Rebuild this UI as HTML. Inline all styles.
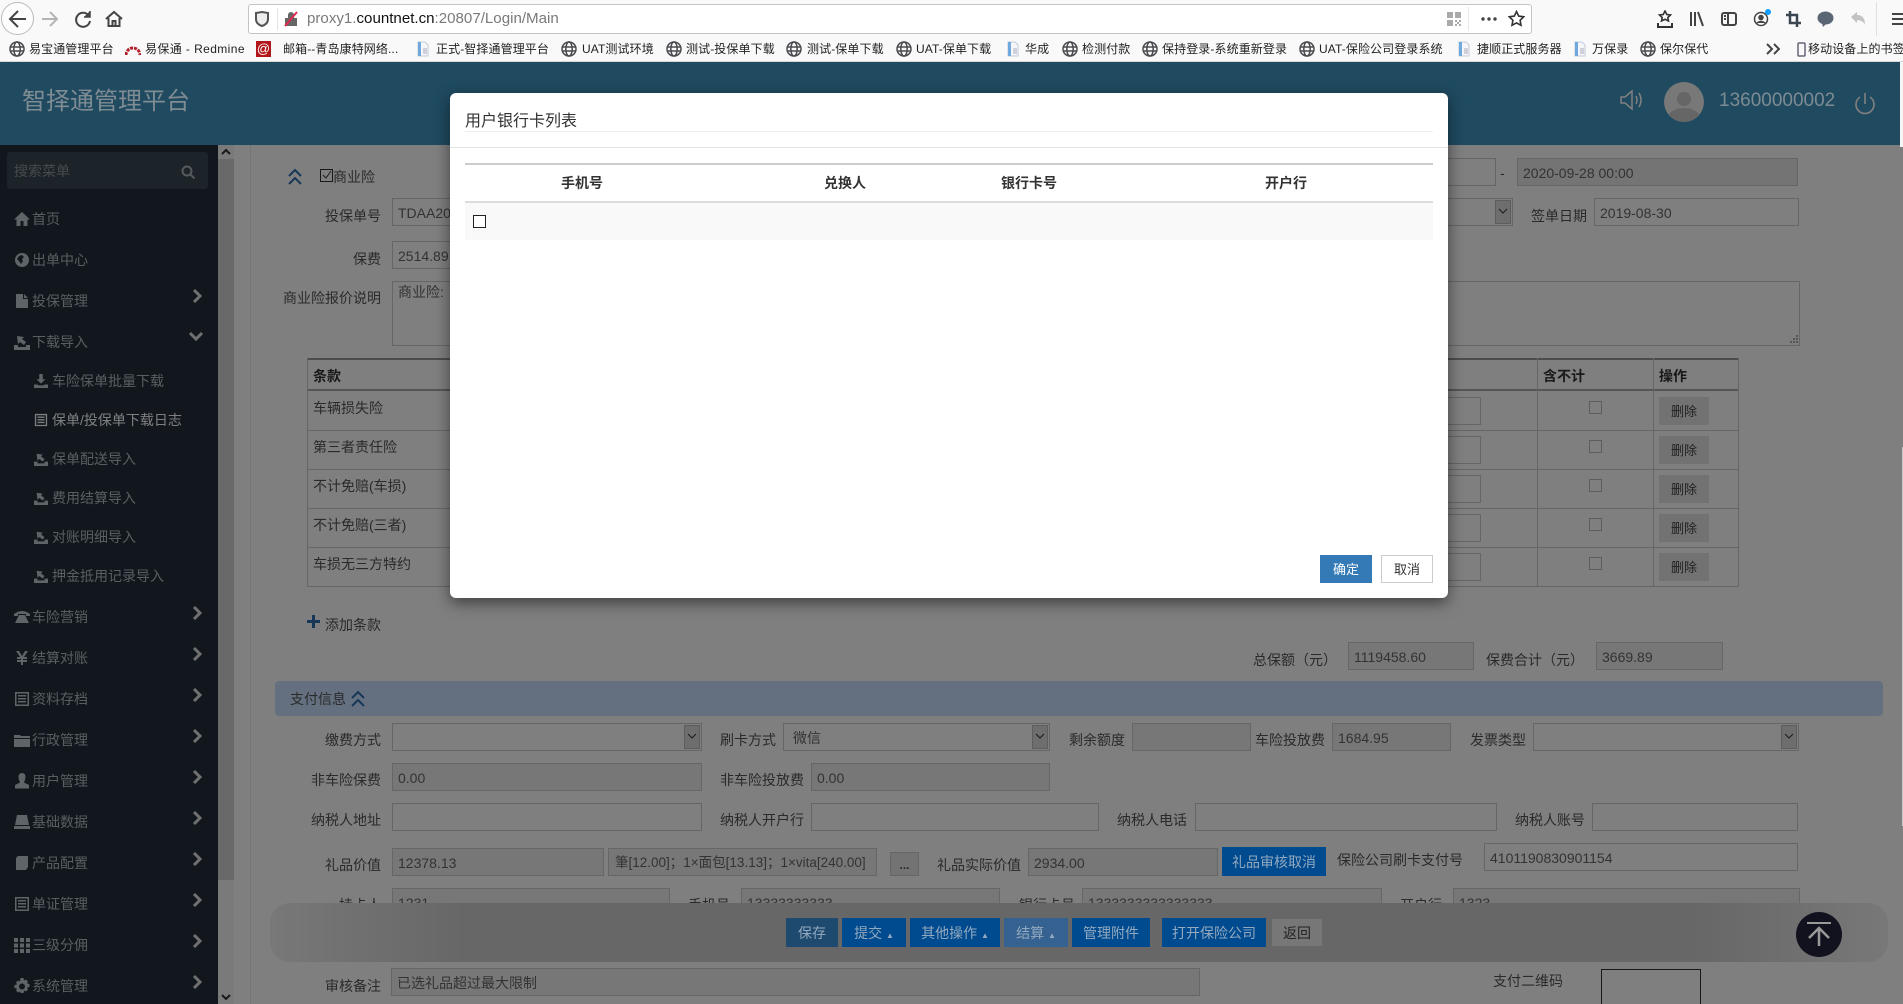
<!DOCTYPE html>
<html lang="zh-CN"><head><meta charset="utf-8"><title>智择通管理平台</title>
<style>
html,body{margin:0;padding:0;background:#fff}
html{overflow:hidden;width:1903px;height:1004px}
body{width:1903px;height:1004px;overflow:hidden;position:relative;font:14px/20px "Liberation Sans","Noto Sans CJK SC",sans-serif;color:#555}
div,span,svg{position:absolute;box-sizing:border-box}
.t{white-space:nowrap}
.bm{top:40px;font-size:12px;line-height:18px;color:#222;white-space:nowrap;letter-spacing:.1px}
.l{white-space:nowrap;text-align:right;color:#555}
.i{height:28px;border:1px solid #ccc;background:#fff;line-height:28px;padding:0 5px;color:#666;white-space:nowrap;overflow:hidden}
.d{background:#eee}
.sa{top:1px;bottom:1px;right:1px;width:16px;background:#ddd;border:1px solid #bbb}
.m{left:32px;color:#b0bcc2;white-space:nowrap}
.s{left:52px;color:#b0bcc2;white-space:nowrap}
.ic{left:14px;width:16px;height:16px;fill:#bcc8ce}
.ic2{left:34px;width:14px;height:14px;fill:#bcc8ce}
.cv{left:192px;width:12px;height:14px;fill:none;stroke:#e0e0e0;stroke-width:3}
.b{top:918px;height:29px;background:#004b8f;color:#93a9bf;text-align:center;line-height:31px;white-space:nowrap}
.del{left:1659px;width:50px;height:28px;background:#e4e4e4;text-align:center;line-height:29px;font-size:13px;color:#444}
.cb{left:1589px;width:13px;height:13px;border:1px solid #bbb;background:#fff}
.tl{background:#ccc}
.th{top:173px;font-weight:bold;color:#333;white-space:nowrap;transform:translateX(-50%)}
</style></head><body>
<svg width="0" height="0" style="position:absolute"><defs>
<symbol id="g" viewBox="0 0 16 16"><g fill="none" stroke="#4a4a4f" stroke-width="1.5"><circle cx="8" cy="8" r="7"/><ellipse cx="8" cy="8" rx="3.2" ry="7"/><path d="M1 6h14M1 10h14"/></g></symbol>
<symbol id="pg" viewBox="0 0 16 16"><path d="M3 1h7l3 3v11H3z" fill="#f4f6fa" stroke="#c4ccd8"/><path d="M3 1h3v14H3z" fill="#6fa8dc"/><path d="M8 8h4M8 10h4M8 12h4" stroke="#aab"/></symbol>
<symbol id="imp" viewBox="0 0 16 16"><path d="M0 11h4v2h8v-2h4v5H0zM3 2l7 1-2 2 4 3-2 3-4-3-2 2z"/></symbol>
<symbol id="dl" viewBox="0 0 16 16"><path d="M6 0h4v6h3l-5 5-5-5h3zM0 12h4l1 1h6l1-1h4v4H0z"/></symbol>
<symbol id="ls" viewBox="0 0 16 16"><path fill-rule="evenodd" d="M1 1h14v14H1zM2.500 2.500v11h11v-11zM4 4h8v1.500H4zM4 7h8v1.500H4zM4 10h8v1.500H4z"/></symbol>
</defs></svg>

<!-- base page under overlay -->
<div style="left:0;top:62px;width:1903px;height:942px;background:#fff"></div>

<!-- sidebar -->
<div style="left:0;top:145px;width:218px;height:859px;background:#222f3a"></div>
<div style="left:7px;top:152px;width:201px;height:37px;background:#3a4853;border-radius:3px"></div>
<div class="t" style="left:14px;top:161px;font-size:14px;color:#8a959c">搜索菜单</div>
<svg style="left:181px;top:165px" width="14" height="14" viewBox="0 0 14 14" fill="none" stroke="#aab4ba" stroke-width="2"><circle cx="6" cy="6" r="4.500"/><path d="M9.500 9.500l4 4"/></svg>

<svg class="ic" style="top:211px" viewBox="0 0 16 16"><path d="M8 1L0 8.500h2.500V15h4v-5h3v5h4V8.500H16z"/></svg><div class="m" style="top:209px">首页</div>
<svg class="ic" style="top:252px" viewBox="0 0 16 16"><path fill-rule="evenodd" d="M8 1a7 7 0 1 0 0 14A7 7 0 0 0 8 1zM5 4l3-1 2 2-2 2 1 2-2 3-2-3-2-2z"/></svg><div class="m" style="top:250px">出单中心</div>
<svg class="ic" style="top:293px" viewBox="0 0 16 16"><path d="M2 1h7v5h5v9H2zM10 1l4 4h-4z"/></svg><div class="m" style="top:291px">投保管理</div>
<svg class="cv" style="top:289px" viewBox="0 0 12 14"><path d="M2 1l6 6-6 6"/></svg>
<svg class="ic" style="top:334px"><use href="#imp"/></svg><div class="m" style="top:332px">下载导入</div>
<svg style="left:188px;top:331px;fill:none;stroke:#e0e0e0;stroke-width:3" width="16" height="12" viewBox="0 0 16 12"><path d="M2 2l6 6 6-6"/></svg>

<svg class="ic2" style="top:374px"><use href="#dl"/></svg><div class="s" style="top:371px">车险保单批量下载</div>
<svg class="ic2" style="top:413px;fill:#fff"><use href="#ls"/></svg><div class="s" style="top:410px;color:#fff">保单/投保单下载日志</div>
<svg class="ic2" style="top:452px"><use href="#imp"/></svg><div class="s" style="top:449px">保单配送导入</div>
<svg class="ic2" style="top:491px"><use href="#imp"/></svg><div class="s" style="top:488px">费用结算导入</div>
<svg class="ic2" style="top:530px"><use href="#imp"/></svg><div class="s" style="top:527px">对账明细导入</div>
<svg class="ic2" style="top:569px"><use href="#imp"/></svg><div class="s" style="top:566px">押金抵用记录导入</div>

<svg class="ic" style="top:609px" viewBox="0 0 16 16"><path d="M0 5q8-6 16 0v2h-4V5H4v2H0zM4 8l1-2h6l1 2 3 6H1z"/></svg><div class="m" style="top:607px">车险营销</div>
<svg class="cv" style="top:606px" viewBox="0 0 12 14"><path d="M2 1l6 6-6 6"/></svg>
<svg class="ic" style="top:650px" viewBox="0 0 16 16"><path d="M2 1h3l3 5 3-5h3l-4 6h3v2H9v1h4v2H9v3H7v-3H3v-2h4V9H3V7h3z"/></svg><div class="m" style="top:648px">结算对账</div>
<svg class="cv" style="top:647px" viewBox="0 0 12 14"><path d="M2 1l6 6-6 6"/></svg>
<svg class="ic" style="top:691px"><use href="#ls"/></svg><div class="m" style="top:689px">资料存档</div>
<svg class="cv" style="top:688px" viewBox="0 0 12 14"><path d="M2 1l6 6-6 6"/></svg>
<svg class="ic" style="top:732px" viewBox="0 0 16 16"><path d="M0 3h6l1 1h9v2H0zM0 7h16v8H0z"/></svg><div class="m" style="top:730px">行政管理</div>
<svg class="cv" style="top:729px" viewBox="0 0 12 14"><path d="M2 1l6 6-6 6"/></svg>
<svg class="ic" style="top:773px" viewBox="0 0 16 16"><path d="M8 0c2.500 0 3.500 2 3.500 4S10.500 8 10 9.500L15 12v3.500H1V12l5-2.500C5.500 8 4.500 6 4.500 4S5.500 0 8 0z"/></svg><div class="m" style="top:771px">用户管理</div>
<svg class="cv" style="top:770px" viewBox="0 0 12 14"><path d="M2 1l6 6-6 6"/></svg>
<svg class="ic" style="top:814px" viewBox="0 0 16 16"><path d="M3 1h10l2 10H1zM0 12h16v3H0z"/></svg><div class="m" style="top:812px">基础数据</div>
<svg class="cv" style="top:811px" viewBox="0 0 12 14"><path d="M2 1l6 6-6 6"/></svg>
<svg class="ic" style="top:855px" viewBox="0 0 16 16"><path d="M2 3l2-2h10v11l-2 3H2z"/></svg><div class="m" style="top:853px">产品配置</div>
<svg class="cv" style="top:852px" viewBox="0 0 12 14"><path d="M2 1l6 6-6 6"/></svg>
<svg class="ic" style="top:896px"><use href="#ls"/></svg><div class="m" style="top:894px">单证管理</div>
<svg class="cv" style="top:893px" viewBox="0 0 12 14"><path d="M2 1l6 6-6 6"/></svg>
<svg class="ic" style="top:937px" viewBox="0 0 16 16"><path d="M0 1h4v4H0zM6 1h4v4H6zM12 1h4v4h-4zM0 6.500h4v4H0zM6 6.500h4v4H6zM12 6.500h4v4h-4zM0 12h4v4H0zM6 12h4v4H6zM12 12h4v4h-4z"/></svg><div class="m" style="top:935px">三级分佣</div>
<svg class="cv" style="top:934px" viewBox="0 0 12 14"><path d="M2 1l6 6-6 6"/></svg>
<svg class="ic" style="top:978px" viewBox="0 0 16 16"><path fill-rule="evenodd" d="M6.500 0h3l.5 2.500 2-1 2 2-1 2 2.500.5v3l-2.500.5 1 2-2 2-2-1-.5 2.500h-3L6 13.500l-2 1-2-2 1-2L.500 10V7L3 6.500l-1-2 2-2 2 1zM8 5.500a3 3 0 1 0 0 6 3 3 0 0 0 0-6z"/></svg><div class="m" style="top:976px">系统管理</div>
<svg class="cv" style="top:975px" viewBox="0 0 12 14"><path d="M2 1l6 6-6 6"/></svg>

<!-- sidebar scrollbar -->
<div style="left:218px;top:145px;width:16px;height:859px;background:#f4f4f4"></div>
<div style="left:218px;top:159px;width:16px;height:721px;background:#d2d2d2"></div>
<svg style="left:221px;top:148px" width="10" height="8" viewBox="0 0 10 8" fill="none" stroke="#333" stroke-width="2"><path d="M1 6l4-4 4 4"/></svg>
<svg style="left:221px;top:993px" width="10" height="8" viewBox="0 0 10 8" fill="none" stroke="#333" stroke-width="2"><path d="M1 2l4 4 4-4"/></svg>
<div style="left:250px;top:145px;width:1px;height:859px;background:#e4e8f0"></div>

<!-- section 1 -->
<svg style="left:288px;top:168px" width="14" height="18" viewBox="0 0 14 18" fill="none" stroke="#2f6fb0" stroke-width="2"><path d="M1 8l6-6 6 6M1 16l6-6 6 6"/></svg>
<div style="left:320px;top:169px;width:13px;height:13px;border:1px solid #333"></div>
<svg style="left:321px;top:170px" width="12" height="11" viewBox="0 0 12 11" fill="none" stroke="#333" stroke-width="1"><path d="M2 5l3 3 5-7"/></svg>
<div class="t" style="left:333px;top:167px;color:#555">商业险</div>
<div class="l" style="left:300px;width:81px;top:206px">投保单号</div>
<div class="i" style="left:392px;top:198px;width:80px">TDAA20</div>
<div class="l" style="left:300px;width:81px;top:249px">保费</div>
<div class="i" style="left:392px;top:241px;width:80px">2514.89</div>
<div class="l" style="left:270px;width:111px;top:288px">商业险报价说明</div>
<div class="i" style="left:392px;top:281px;width:1408px;height:65px;line-height:20px">商业险:</div>
<svg style="left:1788px;top:334px" width="10" height="10" viewBox="0 0 10 10" fill="#aaa"><path d="M8 1h2v2H8zM5 4h2v2H5zM8 4h2v2H8zM2 7h2v2H2zM5 7h2v2H5zM8 7h2v2H8z"/></svg>
<div style="left:1440px;top:158px;width:56px;height:28px;border:1px solid #ccc"></div>
<div class="t" style="left:1500px;top:163px">-</div>
<div class="i" style="left:1517px;top:158px;width:281px;padding-left:5px;background:#e8e8e8">2020-09-28 00:00</div>
<div class="i" style="left:1440px;top:198px;width:73px"><span class="sa"></span></div>
<svg style="left:1498px;top:208px" width="10" height="7" viewBox="0 0 10 7" fill="none" stroke="#333"><path d="M1 1l4 4 4-4"/></svg>
<div class="t" style="left:1531px;top:206px">签单日期</div>
<div class="i" style="left:1594px;top:198px;width:205px">2019-08-30</div>

<!-- clause table -->
<div class="tl" style="left:307px;top:358px;width:1432px;height:2px;background:#999"></div>
<div class="tl" style="left:307px;top:389px;width:1432px;height:2px;background:#aaa"></div>
<div class="tl" style="left:307px;top:430px;width:1432px;height:1px"></div>
<div class="tl" style="left:307px;top:469px;width:1432px;height:1px"></div>
<div class="tl" style="left:307px;top:508px;width:1432px;height:1px"></div>
<div class="tl" style="left:307px;top:547px;width:1432px;height:1px"></div>
<div class="tl" style="left:307px;top:586px;width:1432px;height:1px"></div>
<div class="tl" style="left:307px;top:358px;width:1px;height:228px"></div>
<div class="tl" style="left:1537px;top:358px;width:1px;height:228px"></div>
<div class="tl" style="left:1653px;top:358px;width:1px;height:228px"></div>
<div class="tl" style="left:1738px;top:358px;width:1px;height:228px"></div>
<div class="t" style="left:313px;top:366px;font-weight:bold;color:#333">条款</div>
<div class="t" style="left:1543px;top:366px;font-weight:bold;color:#333">含不计</div>
<div class="t" style="left:1659px;top:366px;font-weight:bold;color:#333">操作</div>
<div class="t" style="left:313px;top:398px">车辆损失险</div>
<div class="t" style="left:313px;top:437px">第三者责任险</div>
<div class="t" style="left:313px;top:476px">不计免赔(车损)</div>
<div class="t" style="left:313px;top:515px">不计免赔(三者)</div>
<div class="t" style="left:313px;top:554px">车损无三方特约</div>
<div class="i" style="left:1430px;top:397px;width:51px"></div>
<div class="i" style="left:1430px;top:436px;width:51px"></div>
<div class="i" style="left:1430px;top:475px;width:51px"></div>
<div class="i" style="left:1430px;top:514px;width:51px"></div>
<div class="i" style="left:1430px;top:553px;width:51px"></div>
<div class="cb" style="top:401px"></div><div class="cb" style="top:440px"></div><div class="cb" style="top:479px"></div><div class="cb" style="top:518px"></div><div class="cb" style="top:557px"></div>
<div class="del" style="top:397px">删除</div><div class="del" style="top:436px">删除</div><div class="del" style="top:475px">删除</div><div class="del" style="top:514px">删除</div><div class="del" style="top:553px">删除</div>

<svg style="left:307px;top:615px" width="13" height="13" viewBox="0 0 13 13" fill="#2f6fb0"><path d="M5 0h3v5h5v3H8v5H5V8H0V5h5z"/></svg>
<div class="t" style="left:325px;top:615px">添加条款</div>
<div class="t" style="left:1253px;top:650px">总保额（元）</div>
<div class="i d" style="left:1348px;top:642px;width:126px">1119458.60</div>
<div class="t" style="left:1486px;top:650px">保费合计（元）</div>
<div class="i d" style="left:1596px;top:642px;width:127px">3669.89</div>

<div style="left:275px;top:681px;width:1608px;height:35px;background:#c8e0ff;border-radius:4px"></div>
<div class="t" style="left:290px;top:689px;color:#555">支付信息</div>
<svg style="left:351px;top:690px" width="14" height="18" viewBox="0 0 14 18" fill="none" stroke="#2f6fb0" stroke-width="2"><path d="M1 8l6-6 6 6M1 16l6-6 6 6"/></svg>

<!-- row 1 -->
<div class="l" style="left:300px;width:81px;top:730px">缴费方式</div>
<div class="i" style="left:392px;top:723px;width:310px"><span class="sa"></span></div>
<svg style="left:687px;top:733px" width="10" height="7" viewBox="0 0 10 7" fill="none" stroke="#333"><path d="M1 1l4 4 4-4"/></svg>
<div class="t" style="left:720px;top:730px">刷卡方式</div>
<div class="i" style="left:783px;top:723px;width:267px;padding-left:9px">微信<span class="sa"></span></div>
<svg style="left:1035px;top:733px" width="10" height="7" viewBox="0 0 10 7" fill="none" stroke="#333"><path d="M1 1l4 4 4-4"/></svg>
<div class="t" style="left:1069px;top:730px">剩余额度</div>
<div class="i d" style="left:1132px;top:723px;width:119px"></div>
<div class="t" style="left:1255px;top:730px">车险投放费</div>
<div class="i d" style="left:1332px;top:723px;width:119px">1684.95</div>
<div class="t" style="left:1470px;top:730px">发票类型</div>
<div class="i" style="left:1533px;top:723px;width:266px"><span class="sa"></span></div>
<svg style="left:1784px;top:733px" width="10" height="7" viewBox="0 0 10 7" fill="none" stroke="#333"><path d="M1 1l4 4 4-4"/></svg>
<!-- row 2 -->
<div class="l" style="left:300px;width:81px;top:770px">非车险保费</div>
<div class="i d" style="left:392px;top:763px;width:310px">0.00</div>
<div class="t" style="left:720px;top:770px">非车险投放费</div>
<div class="i d" style="left:811px;top:763px;width:239px">0.00</div>
<!-- row 3 -->
<div class="l" style="left:300px;width:81px;top:810px">纳税人地址</div>
<div class="i" style="left:392px;top:803px;width:310px"></div>
<div class="t" style="left:720px;top:810px">纳税人开户行</div>
<div class="i" style="left:811px;top:803px;width:288px"></div>
<div class="t" style="left:1117px;top:810px">纳税人电话</div>
<div class="i" style="left:1195px;top:803px;width:302px"></div>
<div class="t" style="left:1515px;top:810px">纳税人账号</div>
<div class="i" style="left:1592px;top:803px;width:206px"></div>
<!-- row 4 -->
<div class="l" style="left:300px;width:81px;top:855px">礼品价值</div>
<div class="i d" style="left:392px;top:848px;width:212px">12378.13</div>
<div class="i d" style="left:608px;top:848px;width:269px;padding-left:6px;font-size:13.500px">筆[12.00]；1×面包[13.13]；1×vita[240.00]</div>
<div style="left:890px;top:852px;width:29px;height:24px;background:#e6e6e6;border:1px solid #ccc;text-align:center;line-height:24px;font-size:12px;font-weight:bold">...</div>
<div class="t" style="left:937px;top:855px">礼品实际价值</div>
<div class="i d" style="left:1028px;top:848px;width:190px">2934.00</div>
<div class="t" style="left:1337px;top:850px">保险公司刷卡支付号</div>
<div class="i" style="left:1484px;top:843px;width:314px">4101190830901154</div>
<!-- row 5 -->
<div class="l" style="left:300px;width:81px;top:895px">持卡人</div>
<div class="i d" style="left:392px;top:888px;width:278px">1231</div>
<div class="t" style="left:688px;top:895px">手机号</div>
<div class="i d" style="left:741px;top:888px;width:259px">13333333333</div>
<div class="t" style="left:1019px;top:895px">银行卡号</div>
<div class="i d" style="left:1082px;top:888px;width:300px">1333333333333333</div>
<div class="t" style="left:1400px;top:895px">开户行</div>
<div class="i d" style="left:1453px;top:888px;width:347px">1323</div>

<!-- bottom -->
<div class="l" style="left:300px;width:81px;top:976px">审核备注</div>
<div class="i d" style="left:391px;top:968px;width:809px">已选礼品超过最大限制</div>
<div class="t" style="left:1493px;top:971px">支付二维码</div>
<div style="left:1601px;top:969px;width:100px;height:35px;border:1px solid #333;border-bottom:0"></div>

<!-- overlay -->
<div style="left:0;top:62px;width:1903px;height:942px;background:rgba(0,0,0,.5)"></div>

<!-- header, painted at its final dimmed colours -->
<div style="left:0;top:62px;width:1900px;height:83px;background:#1f4a60"></div>
<div class="t" style="left:22px;top:84px;font-size:24px;line-height:36px;color:#7f8c93">智择通管理平台</div>
<svg style="left:1620px;top:89px" width="24" height="22" viewBox="0 0 24 22" fill="none" stroke="#808080" stroke-width="1.500"><path d="M1 8h4l7-6v18l-7-6H1zM16 7q2 4 0 8M19 4q4 7 0 14"/></svg>
<div style="left:1664px;top:82px;width:40px;height:40px;border-radius:50%;background:#787878;overflow:hidden"><div style="left:13px;top:10px;width:14px;height:14px;border-radius:50%;background:#666"></div><div style="left:4px;top:26px;width:32px;height:20px;border-radius:50%;background:#666"></div></div>
<div class="t" style="left:1719px;top:88px;font-size:19px;line-height:26px;color:#7d8b93">13600000002</div>
<svg style="left:1854px;top:92px" width="22" height="24" viewBox="0 0 22 24" fill="none" stroke="#808080" stroke-width="1.600"><path d="M6 5a9 9 0 1 0 10 0M11 1v11"/></svg>

<!-- gift audit button and action bar, painted at their final dimmed colours -->
<div class="b" style="left:1222px;top:847px;width:104px">礼品审核取消</div>
<div style="left:270px;top:903px;width:1618px;height:59px;border-radius:20px;background:linear-gradient(90deg,#787878 0,#676767 12%,#676767 88%,#787878 100%)"></div>
<div class="b" style="left:786px;width:52px;background:#1d4a6e">保存</div>
<div class="b" style="left:842px;width:64px">提交 <span style="font-size:8px;position:static">▲</span></div>
<div class="b" style="left:910px;width:90px">其他操作 <span style="font-size:8px;position:static">▲</span></div>
<div class="b" style="left:1004px;width:64px;background:#356291">结算 <span style="font-size:8px;position:static">▲</span></div>
<div class="b" style="left:1072px;width:78px">管理附件</div>
<div class="b" style="left:1162px;width:104px">打开保险公司</div>
<div class="b" style="left:1272px;top:919px;width:50px;height:27px;line-height:29px;background:#777;color:#222">返回</div>
<div style="left:1796px;top:912px;width:46px;height:45px;border-radius:50%;background:#12121f"></div>
<svg style="left:1806px;top:920px" width="26" height="28" viewBox="0 0 26 28" fill="none" stroke="#999" stroke-width="2.500"><path d="M1 3h24" stroke-width="2"/><path d="M13 26V8M3 18l10-10 10 10"/></svg>

<!-- right-edge scrollbar sliver -->
<div style="left:1900px;top:62px;width:3px;height:85px;background:#f6f6f6"></div>
<div style="left:1902px;top:447px;width:1px;height:379px;background:#c8c8c8"></div>

<!-- modal -->
<div style="left:450px;top:93px;width:998px;height:505px;background:#fff;border-radius:6px;box-shadow:0 5px 15px rgba(0,0,0,.5)"></div>
<div class="t" style="left:465px;top:111px;font-size:16px;line-height:22px;color:#333">用户银行卡列表</div>
<div style="left:465px;top:131px;width:968px;height:1px;background:#eee"></div>
<div style="left:450px;top:147px;width:998px;height:1px;background:#e5e5e5"></div>
<div style="left:465px;top:163px;width:968px;height:2px;background:#ccc"></div>
<div class="th" style="left:582px">手机号</div>
<div class="th" style="left:845px">兑换人</div>
<div class="th" style="left:1029px">银行卡号</div>
<div class="th" style="left:1286px">开户行</div>
<div style="left:465px;top:201px;width:968px;height:2px;background:#ddd"></div>
<div style="left:465px;top:203px;width:968px;height:37px;background:#f9f9f9"></div>
<div style="left:473px;top:215px;width:13px;height:13px;border:1px solid #222;background:#fff"></div>
<div style="left:1320px;top:555px;width:52px;height:28px;background:#337ab7;color:#fff;text-align:center;line-height:29px;font-size:13px">确定</div>
<div style="left:1381px;top:555px;width:52px;height:28px;background:#fff;border:1px solid #ccc;color:#333;text-align:center;line-height:27px;font-size:13px">取消</div>

<!-- browser chrome -->
<div style="left:0;top:0;width:1903px;height:62px;background:#f9f9fa;border-bottom:1px solid #d8d8d8"></div>
<div style="left:1px;top:2px;width:33px;height:33px;border:1px solid #bbb;border-radius:50%;background:#fdfdfd"></div>
<svg style="left:8px;top:9px" width="20" height="20" viewBox="0 0 20 20" fill="none" stroke="#444" stroke-width="2"><path d="M18 10H3M10 2l-8 8 8 8"/></svg>
<svg style="left:41px;top:10px" width="18" height="18" viewBox="0 0 18 18" fill="none" stroke="#b4b4b4" stroke-width="2"><path d="M1 9h15M9 2l7 7-7 7"/></svg>
<svg style="left:74px;top:10px" width="18" height="18" viewBox="0 0 18 18" fill="none" stroke="#444" stroke-width="2"><path d="M15 6a7 7 0 1 0 1 5"/><path d="M16 1v6h-6" stroke-width="1.500" fill="#444"/></svg>
<svg style="left:105px;top:10px" width="18" height="18" viewBox="0 0 18 18" fill="none" stroke="#444" stroke-width="2"><path d="M1 9l8-7 8 7M3.500 8v8h11V8M7.500 16v-5h3v5"/></svg>
<div style="left:248px;top:4px;width:1284px;height:30px;background:#fff;border:1px solid #c4c4c4;border-radius:3px"></div>
<svg style="left:255px;top:11px" width="14" height="16" viewBox="0 0 14 16" fill="#eee" stroke="#555" stroke-width="2"><path d="M1 2l6-1 6 1v6q0 5-6 7-6-2-6-7z"/></svg>
<div style="left:277px;top:8px;width:1px;height:22px;background:#e4e4e4"></div>
<svg style="left:284px;top:11px" width="14" height="16" viewBox="0 0 14 16"><path d="M1 7h12v8H1zM4 7V4a3 3 0 0 1 6 0v3" fill="#666"/><path d="M1 15L13 1" stroke="#e22850" stroke-width="2"/></svg>
<div class="t" style="left:307px;top:9px;font-size:15.100px;color:#7a7a7a">proxy1.<span style="position:static;color:#111">countnet.cn</span>:20807/Login/Main</div>
<svg style="left:1447px;top:12px" width="14" height="15" viewBox="0 0 14 15" fill="#aaa"><path d="M0 0h6v6H0zM8 0h6v6H8zM0 8h6v6H0zM8 8h2v2H8zM12 8h2v2h-2zM10 10h2v2h-2zM8 12h2v2H8zM12 12h2v2h-2z"/></svg>
<div style="left:1468px;top:7px;width:1px;height:24px;background:#e8e8e8"></div>
<svg style="left:1481px;top:17px" width="16" height="4" viewBox="0 0 16 4" fill="#444"><circle cx="2" cy="2" r="1.700"/><circle cx="8" cy="2" r="1.700"/><circle cx="14" cy="2" r="1.700"/></svg>
<svg style="left:1508px;top:10px" width="17" height="17" viewBox="0 0 17 17" fill="none" stroke="#333" stroke-width="1.600"><path d="M8.500 1.500l2.200 4.600 5 .7-3.600 3.500.9 5-4.500-2.400-4.500 2.400.9-5L1.300 6.800l5-.7z"/></svg>
<svg style="left:1657px;top:10px" width="16" height="18" viewBox="0 0 16 18" fill="none" stroke="#333" stroke-width="1.600"><path d="M8 1l1.800 3.500 3.700.5-2.700 2.500.7 3.500L8 9.300 4.500 11l.7-3.500L2.500 5l3.700-.5z"/><path d="M1 13v4h14v-4" stroke-width="2"/></svg>
<svg style="left:1689px;top:11px" width="16" height="16" viewBox="0 0 16 16" stroke="#444" stroke-width="2" fill="none"><path d="M2 1v14M6 1v14M9 1l5 14"/></svg>
<svg style="left:1721px;top:11px" width="16" height="16" viewBox="0 0 16 16" stroke="#444" stroke-width="2" fill="none"><rect x="1" y="2" width="14" height="12" rx="2"/><path d="M7 2v12M3 5h2M3 8h2"/></svg>
<svg style="left:1753px;top:11px" width="16" height="16" viewBox="0 0 16 16" stroke="#444" stroke-width="1.500" fill="none"><circle cx="8" cy="8" r="6.500"/><circle cx="8" cy="6.500" r="2" fill="#444"/><path d="M4 12q4-3 8 0" fill="#444"/></svg>
<div style="left:1765px;top:9px;width:6px;height:6px;border-radius:50%;background:#0a9fff"></div>
<svg style="left:1786px;top:11px" width="15" height="16" viewBox="0 0 15 16" stroke="#3a4652" stroke-width="2.500" fill="none"><path d="M4 0v12h11M0 4h11v12"/></svg>
<svg style="left:1817px;top:11px" width="17" height="16" viewBox="0 0 17 16" fill="#5a6674"><ellipse cx="8.500" cy="7" rx="8" ry="6.500"/><path d="M5 12l1 4 4-4z"/></svg>
<svg style="left:1850px;top:11px" width="16" height="16" viewBox="0 0 16 16" fill="#c2c2c2"><path d="M1 6l6-5v3q8 0 8 10-2-5-8-5v3z"/></svg>
<div style="left:1876px;top:2px;width:1px;height:34px;background:#e0e0e0"></div>
<svg style="left:1892px;top:13px" width="11" height="13" viewBox="0 0 11 13" fill="#444"><path d="M0 0h11v2H0zM0 5h11v2H0zM0 10h11v2H0z"/></svg>

<!-- bookmarks -->
<svg style="left:9px;top:41px" width="16" height="16"><use href="#g"/></svg><div class="bm" style="left:29px">易宝通管理平台</div>
<svg style="left:125px;top:44px" width="16" height="12" viewBox="0 0 16 12" fill="none" stroke="#b3202a" stroke-width="3" stroke-dasharray="3 1"><path d="M1 11a7 7 0 0 1 14 0"/></svg><div class="bm" style="left:145px;letter-spacing:.4px">易保通 - Redmine</div>
<div style="left:256px;top:41px;width:15px;height:16px;background:#b3161a;color:#fff;font-size:13px;line-height:15px;text-align:center">@</div><div class="bm" style="left:283px">邮箱--青岛康特网络...</div>
<svg style="left:415px;top:41px" width="16" height="16"><use href="#pg"/></svg><div class="bm" style="left:436px">正式-智择通管理平台</div>
<svg style="left:561px;top:41px" width="16" height="16"><use href="#g"/></svg><div class="bm" style="left:582px">UAT测试环境</div>
<svg style="left:666px;top:41px" width="16" height="16"><use href="#g"/></svg><div class="bm" style="left:686px">测试-投保单下载</div>
<svg style="left:786px;top:41px" width="16" height="16"><use href="#g"/></svg><div class="bm" style="left:807px">测试-保单下载</div>
<svg style="left:896px;top:41px" width="16" height="16"><use href="#g"/></svg><div class="bm" style="left:916px">UAT-保单下载</div>
<svg style="left:1005px;top:41px" width="16" height="16"><use href="#pg"/></svg><div class="bm" style="left:1025px">华成</div>
<svg style="left:1062px;top:41px" width="16" height="16"><use href="#g"/></svg><div class="bm" style="left:1082px">检测付款</div>
<svg style="left:1142px;top:41px" width="16" height="16"><use href="#g"/></svg><div class="bm" style="left:1162px">保持登录-系统重新登录</div>
<svg style="left:1299px;top:41px" width="16" height="16"><use href="#g"/></svg><div class="bm" style="left:1319px">UAT-保险公司登录系统</div>
<svg style="left:1456px;top:41px" width="16" height="16"><use href="#pg"/></svg><div class="bm" style="left:1477px">捷顺正式服务器</div>
<svg style="left:1572px;top:41px" width="16" height="16"><use href="#pg"/></svg><div class="bm" style="left:1592px">万保录</div>
<svg style="left:1640px;top:41px" width="16" height="16"><use href="#g"/></svg><div class="bm" style="left:1660px">保尔保代</div>
<svg style="left:1766px;top:43px" width="14" height="12" viewBox="0 0 14 12" fill="none" stroke="#444" stroke-width="2"><path d="M1 1l5 5-5 5M8 1l5 5-5 5"/></svg>
<svg style="left:1797px;top:42px" width="9" height="15" viewBox="0 0 9 15" fill="none" stroke="#667" stroke-width="1.500"><rect x="1" y="1" width="7" height="13" rx="1"/></svg>
<div class="bm" style="left:1808px">移动设备上的书签</div>
</body></html>
